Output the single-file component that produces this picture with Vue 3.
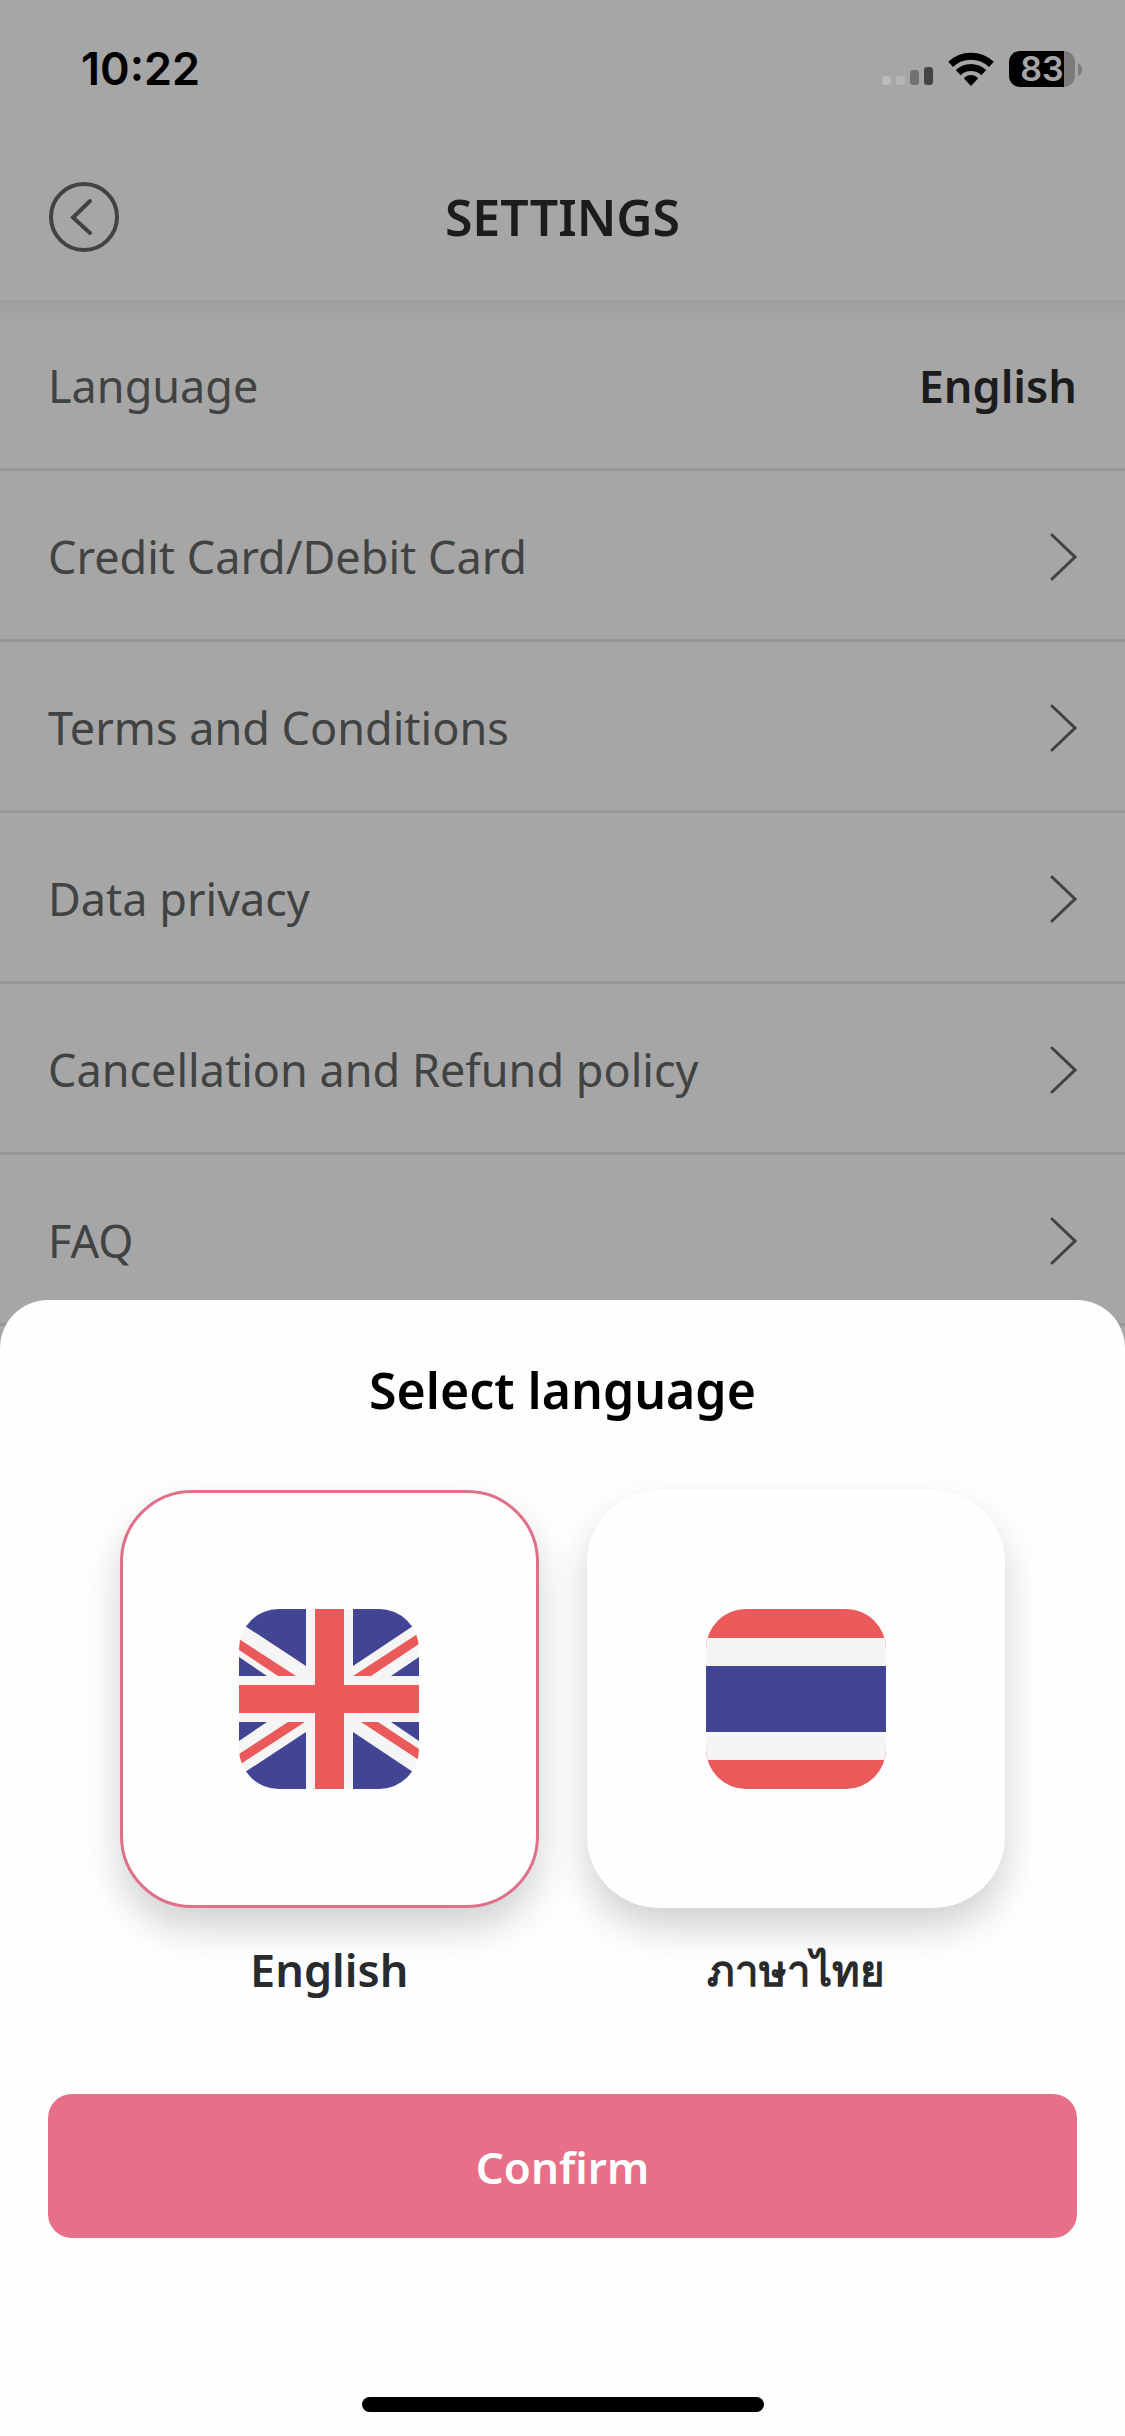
<script setup>
import { ref } from 'vue'

const links = [
  'Credit Card/Debit Card',
  'Terms and Conditions',
  'Data privacy',
  'Cancellation and Refund policy',
  'FAQ',
]
const selected = ref('en')
</script>

<template>
  <div class="page">
    <div class="status">
      <span class="time">10:22</span>
      <div class="indicators">
        <svg class="signal" viewBox="0 0 51 18" aria-hidden="true">
          <rect x="0" y="9" width="9" height="9" rx="3" fill="#bababa" />
          <rect x="14" y="9" width="9" height="9" rx="3" fill="#b5b5b5" />
          <rect x="28" y="3" width="9" height="15" rx="3" fill="#727272" />
          <rect x="42" y="0" width="9" height="18" rx="3" fill="#454545" />
        </svg>
        <svg class="wifi" viewBox="0 0 46 34" aria-hidden="true">
          <g fill="none" stroke="#000" stroke-width="7">
            <path d="M2.6 12.4A29.5 29.5 0 0 1 43.4 12.4" />
            <path d="M10.2 20.6A18.5 18.5 0 0 1 35.8 20.6" />
          </g>
          <path d="M23 34L16.2 26.8Q15.8 26 16.6 25.4Q23 20.8 29.4 25.4Q30.2 26 29.8 26.8Z" />
        </svg>
        <div class="battery">
          <span class="level">83</span>
          <svg class="nub" viewBox="0 0 4 13" aria-hidden="true">
            <path d="M0 0Q4 2 4 6.5Q4 11 0 13Z" fill="#7b7b7b" />
          </svg>
        </div>
      </div>
    </div>

    <header class="header">
      <button class="back" type="button" aria-label="Back">
        <svg viewBox="0 0 70 70" fill="none" stroke="#414242" stroke-width="4">
          <circle cx="35" cy="35" r="33" />
          <path d="M41 19L24 35.500L41 51" stroke-linecap="round" />
        </svg>
      </button>
      <h1 class="title">SETTINGS</h1>
    </header>

    <main class="list">
      <div class="row">
        <span>Language</span>
        <strong class="value">English</strong>
      </div>
      <a v-for="name in links" :key="name" class="row" href="#">
        <span>{{ name }}</span>
        <svg class="chevron" viewBox="0 0 28 50" fill="none" stroke="#414242" stroke-width="3" aria-hidden="true">
          <path d="M3 3L26 25L3 47" stroke-linecap="round" />
        </svg>
      </a>
    </main>

    <form class="sheet" role="dialog" aria-labelledby="sheet-title" @submit.prevent>
      <h2 id="sheet-title" class="sheet-title">Select language</h2>
      <div class="options">
        <label class="option">
          <input v-model="selected" class="radio" type="radio" name="language" value="en" />
          <span class="card">
            <svg class="flag" viewBox="0 0 180 180" aria-hidden="true">
              <rect width="180" height="180" fill="#f5f5f5" />
              <g fill="#414594">
                <path d="M0 13L67 57V0H0ZM180 13L114 57V0H180Z" />
                <path d="M0 167L67 123V180H0ZM180 167L114 123V180H180Z" />
                <path d="M0 48L28 67H0ZM180 48L152 67H180ZM0 132L28 113H0ZM180 132L152 113H180Z" />
              </g>
              <g fill="#eb5a5b">
                <path d="M0 30L57 67H39L0 41ZM180 24L114 67H132L180 35Z" />
                <path d="M0 156L66 113H49L0 145ZM180 151L122 113H139L180 140Z" />
                <path d="M76 0H105V180H76ZM0 76H180V104H0Z" />
              </g>
            </svg>
          </span>
          <span class="name">English</span>
        </label>
        <label class="option">
          <input v-model="selected" class="radio" type="radio" name="language" value="th" />
          <span class="card">
            <svg class="flag" viewBox="0 0 180 180" aria-hidden="true">
              <rect width="180" height="180" fill="#eb5a5b" />
              <rect y="29" width="180" height="122" fill="#f5f5f5" />
              <rect y="57" width="180" height="66" fill="#414594" />
            </svg>
          </span>
          <span class="name thai" lang="th">ภาษาไทย</span>
        </label>
      </div>
      <button class="confirm" type="submit">Confirm</button>
      <div class="home-bar"></div>
    </form>
  </div>
</template>

<style>
body {
  background: #a6a6a6;
}
</style>

<style scoped>
.page {
  min-height: 100vh;
  background: #a6a6a6;
  color: #414242;
  font-family: "Noto Sans", "Open Sans", sans-serif;
  font-size: 45px;
  line-height: 60px;
}

.status {
  display: flex;
  align-items: center;
  justify-content: space-between;
  height: 138px;
  padding: 0 43px 0 81px;
  box-sizing: border-box;
  color: #000;
  font-family: Inter, sans-serif;
}

.time {
  font-weight: 600;
}

.indicators {
  display: flex;
  align-items: center;
}

.signal {
  width: 51px;
  height: 18px;
  margin: 14px 15px 0 0;
}

.wifi {
  width: 46px;
  height: 34px;
  margin-right: 15px;
}

.battery {
  display: flex;
  align-items: center;
  gap: 3px;
}

.level {
  width: 66px;
  height: 36px;
  border-radius: 11px;
  background: linear-gradient(to right, #000 55px, #7b7b7b 55px);
  color: #a6a6a6;
  font-size: 34px;
  font-weight: 600;
  line-height: 36px;
  text-align: center;
}

.nub {
  width: 4px;
  height: 13px;
}

.header {
  display: grid;
  grid-template-columns: 70px 1fr 70px;
  align-items: center;
  height: 162px;
  padding: 0 49px 4px;
  box-sizing: border-box;
}

.back {
  width: 70px;
  height: 70px;
  padding: 0;
  border: 0;
  background: none;
  cursor: pointer;
}

.back svg {
  display: block;
}

.title,
.sheet-title {
  margin: 0;
  font-size: 50px;
  font-weight: 600;
  line-height: 60px;
  text-align: center;
}

.title {
  color: #1c1c1d;
}

.list {
  background: linear-gradient(#9f9f9f, #a6a6a6 24px);
}

.row {
  display: flex;
  align-items: center;
  justify-content: space-between;
  height: 171px;
  padding: 3px 48px 0;
  box-sizing: border-box;
  border-bottom: 3px solid #959696;
  color: inherit;
  text-decoration: none;
}

.value {
  color: #1c1c1d;
  font-weight: 600;
}

.chevron {
  width: 28px;
  height: 50px;
}

.sheet {
  position: fixed;
  right: 0;
  bottom: 0;
  left: 0;
  padding: 60px 48px 24px;
  border-radius: 48px 48px 0 0;
  background: #fefefe;
}

.sheet-title {
  color: #000;
}

.options {
  display: grid;
  grid-template-columns: 1fr 1fr;
  gap: 48px;
  margin: 70px 72px 94px;
}

.option {
  display: flex;
  flex-direction: column;
  gap: 32px;
  cursor: pointer;
}

.radio {
  position: absolute;
  opacity: 0;
}

.card {
  display: flex;
  align-items: center;
  justify-content: center;
  aspect-ratio: 1;
  box-sizing: border-box;
  border: 3px solid transparent;
  border-radius: 72px;
  background: #fefefe;
  box-shadow: 0 20px 36px rgba(30, 36, 42, 0.2);
}

.radio:checked + .card {
  border-color: #e0708a;
}

.flag {
  width: 180px;
  height: 180px;
  border-radius: 40px;
}

.name {
  color: #292a2b;
  font-weight: 600;
  text-align: center;
}

.thai {
  font-size: 42px;
}

.confirm {
  display: block;
  width: 100%;
  height: 144px;
  padding: 2px 0 0;
  border: 0;
  border-radius: 24px;
  background: #e77088;
  color: #fff;
  font: inherit;
  font-size: 44px;
  font-weight: 600;
  cursor: pointer;
}

.home-bar {
  width: 402px;
  height: 15px;
  margin: 159px auto 0;
  border-radius: 8px;
  background: #000;
}
</style>
